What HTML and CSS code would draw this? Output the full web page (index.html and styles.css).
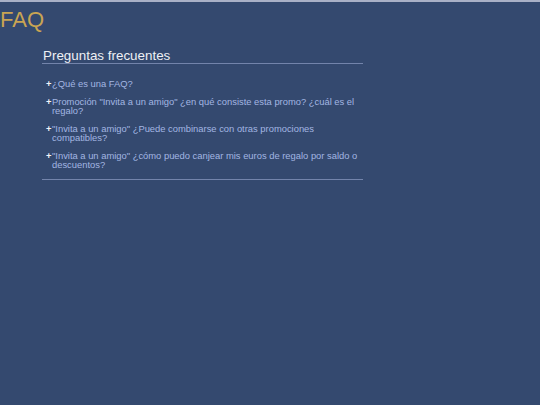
FILE: index.html
```html
<!DOCTYPE html>
<html lang="es">
<head>
<meta charset="utf-8">
<title>FAQ</title>
<link rel="stylesheet" href="styles.css">
</head>
<body>
<h1 class="page-title">FAQ</h1>
<section class="faq">
  <h2 class="faq-heading">Preguntas frecuentes</h2>
  <ul class="faq-list">
    <li class="faq-item"><span class="plus">+</span><a class="faq-link">¿Qué es una FAQ?</a></li>
    <li class="faq-item"><span class="plus">+</span><a class="faq-link">Promoción "Invita a un amigo" ¿en qué consiste esta promo? ¿cuál es el regalo?</a></li>
    <li class="faq-item"><span class="plus">+</span><a class="faq-link">"Invita a un amigo" ¿Puede combinarse con otras promociones compatibles?</a></li>
    <li class="faq-item"><span class="plus">+</span><a class="faq-link">"Invita a un amigo" ¿cómo puedo canjear mis euros de regalo por saldo o descuentos?</a></li>
  </ul>
</section>
</body>
</html>
```

FILE: styles.css
```css
html, body {
  margin: 0;
  padding: 0;
  height: 100%;
}
body {
  background: #34496f;
  border-top: 2px solid #a9b0c6;
  box-sizing: border-box;
  font-family: "Liberation Sans", Arial, sans-serif;
}
.page-title {
  margin: 7px 0 0 0;
  font-size: 22px;
  line-height: 22px;
  font-weight: normal;
  color: #c9a453;
}
.faq {
  margin: 0 0 0 42px;
  width: 321px;
  padding-top: 17px;
  border-bottom: 1px solid #7384ab;
  padding-bottom: 10px;
}
.faq-heading {
  margin: 0;
  padding: 0 0 0 1px;
  font-size: 13.4px;
  line-height: 15px;
  font-weight: normal;
  color: #eef0f4;
  border-bottom: 1px solid #7384ab;
}
.faq-list {
  list-style: none;
  margin: 0;
  padding: 15px 0 0 4px;
}
.faq-item {
  display: flex;
  font-size: 9.4px;
  line-height: 9px;
  margin-bottom: 9px;
}
.faq-item:last-child {
  margin-bottom: 0;
}
.plus {
  flex: none;
  width: 6px;
  color: #f2f4f8;
  font-weight: bold;
}
.faq-link {
  color: #a3b6e2;
}
```
